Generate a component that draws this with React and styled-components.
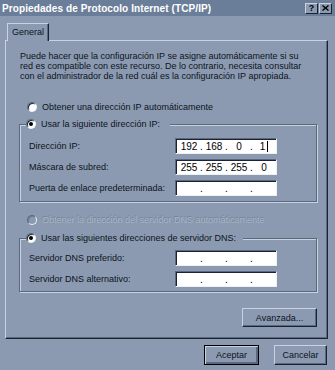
import React from 'react';
import styled, { createGlobalStyle } from 'styled-components';

const BG = '#8b9ab1';
const LIGHT = '#c9d3df';
const SHADOW = '#5a6980';
const DARK = '#1c2330';
const TEXT = '#0d1320';

const GlobalStyle = createGlobalStyle`
  html, body {
    margin: 0;
    padding: 0;
    background: ${BG};
  }
  body {
    font-family: "Liberation Sans", Arial, sans-serif;
    font-size: 9px;
    color: ${TEXT};
  }
`;

const Window = styled.div`
  width: 335px;
  height: 370px;
  background: ${BG};
  display: flex;
  flex-direction: column;
  overflow: hidden;
`;

const TitleBar = styled.div`
  height: 16px;
  background: #6b7e99;
  display: flex;
  align-items: center;
  justify-content: space-between;
  padding: 0 3px 0 2px;
`;

const Title = styled.span`
  color: #fff;
  font-weight: bold;
  font-size: 10px;
  letter-spacing: 0.1px;
  white-space: nowrap;
`;

const Controls = styled.div`
  display: flex;
  gap: 1px;
`;

const CtrlButton = styled.div`
  width: 13px;
  height: 11px;
  box-sizing: border-box;
  background: ${BG};
  border: 1px solid;
  border-color: ${LIGHT} ${DARK} ${DARK} ${LIGHT};
  display: flex;
  align-items: center;
  justify-content: center;
  font-weight: bold;
  font-size: 9px;
  line-height: 9px;
  color: #000;
`;

const Body = styled.div`
  padding: 7px 7px 0 5px;
  display: flex;
  flex-direction: column;
`;

const TabStrip = styled.div`
  display: flex;
  padding-left: 2px;
`;

const Tab = styled.div`
  position: relative;
  z-index: 1;
  height: 18px;
  width: 42px;
  box-sizing: border-box;
  margin-bottom: -1px;
  background: ${BG};
  border-top: 1px solid ${LIGHT};
  border-left: 1px solid ${LIGHT};
  border-right: 1px solid ${DARK};
  box-shadow: inset -1px 0 0 ${SHADOW};
  display: flex;
  align-items: center;
  justify-content: center;
  padding-bottom: 1px;
`;

const Panel = styled.div`
  height: 299px;
  box-sizing: border-box;
  border: 1px solid;
  border-color: ${LIGHT} ${DARK} ${DARK} ${LIGHT};
  box-shadow: inset -1px -1px 0 ${SHADOW};
  padding: 10px 10px 0 13px;
  display: flex;
  flex-direction: column;
`;

const Intro = styled.p`
  margin: 0;
  padding-left: 1px;
  line-height: 10px;
  white-space: nowrap;
`;

const Option = styled.div`
  display: flex;
  align-items: center;
  gap: 5px;
  height: 12px;
  line-height: 12px;
  white-space: nowrap;
  margin-left: ${(p) => p.$indent ?? 8}px;
  margin-top: ${(p) => p.$top ?? 0}px;
  color: ${(p) => (p.$disabled ? '#a9b5c6' : TEXT)};
  text-shadow: ${(p) => (p.$disabled ? '-0.6px -0.6px 0 #73829a' : 'none')};
`;

const Radio = styled.span`
  position: relative;
  width: 10px;
  height: 10px;
  flex: none;
  box-sizing: border-box;
  border-radius: 50%;
  background: ${(p) => (p.$disabled ? BG : '#fff')};
  border: 1px solid;
  border-color: ${SHADOW} #edf1f6 #edf1f6 ${SHADOW};
  box-shadow: inset 1px 1px 0 ${(p) => (p.$disabled ? '#6c7b92' : DARK)};

  &::after {
    content: '';
    display: ${(p) => (p.$checked ? 'block' : 'none')};
    position: absolute;
    left: 2px;
    top: 2px;
    width: 4px;
    height: 4px;
    border-radius: 50%;
    background: #000;
  }
`;

const Group = styled.fieldset`
  margin: ${(p) => p.$top}px 0 0 0;
  min-width: 0;
  padding: ${(p) => p.$padTop}px 9px ${(p) => p.$padBottom}px 9px;
  border: 1px solid ${SHADOW};
  box-shadow: inset 1px 1px 0 ${LIGHT}, 1px 1px 0 ${LIGHT};
  display: flex;
  flex-direction: column;
  gap: 5px;
`;

const Legend = styled.legend`
  margin-left: -3px;
  padding: 0 ${(p) => p.$gap}px 0 0;
  background: ${BG};
  position: relative;
`;

const FieldRow = styled.div`
  display: grid;
  grid-template-columns: 146px 102px;
  align-items: center;
  height: 16px;
  white-space: nowrap;
`;

const IpBox = styled.div`
  height: 16px;
  box-sizing: border-box;
  background: #fff;
  border: 1px solid;
  border-color: ${SHADOW} #edf1f6 #edf1f6 ${SHADOW};
  box-shadow: inset 1px 1px 0 ${DARK};
  display: flex;
  align-items: center;
  padding: 1px 0 0 2px;
  color: #000;
  font-size: 10px;
`;

const Segment = styled.span`
  width: 22px;
  display: flex;
  justify-content: center;
  align-items: center;
`;

const Dot = styled.span`
  width: 3px;
  text-align: center;
`;

const Caret = styled.span`
  display: inline-block;
  width: 1px;
  height: 11px;
  background: #000;
  margin-left: 2px;
`;

const Button = styled.div`
  width: ${(p) => p.$w}px;
  height: ${(p) => p.$h}px;
  box-sizing: border-box;
  border: 1px solid;
  border-color: ${(p) => (p.$default ? '#000' : `${LIGHT} ${DARK} ${DARK} ${LIGHT}`)};
  box-shadow: ${(p) =>
    p.$default
      ? `inset 1px 1px 0 ${LIGHT}, inset -2px -2px 0 ${SHADOW}`
      : `inset -1px -1px 0 ${SHADOW}`};
  display: flex;
  align-items: center;
  justify-content: center;
  white-space: nowrap;
`;

const AdvancedRow = styled.div`
  display: flex;
  justify-content: flex-end;
  margin-top: 16px;
`;

const Footer = styled.div`
  display: flex;
  justify-content: flex-end;
  gap: 15px;
  margin-top: 6px;
  padding-right: 1px;
`;

const IpField = ({ parts = ['', '', '', ''], caret }) => (
  <IpBox>
    {parts.map((part, i) => (
      <React.Fragment key={i}>
        <Segment>
          {part}
          {caret && i === 3 && <Caret />}
        </Segment>
        {i < 3 && <Dot>.</Dot>}
      </React.Fragment>
    ))}
  </IpBox>
);

const CloseGlyph = () => (
  <svg width="7" height="6" viewBox="0 0 7 6">
    <path d="M0.5 0.5 L6.5 5.5 M6.5 0.5 L0.5 5.5" stroke="#000" strokeWidth="1.4" />
  </svg>
);

const App = () => (
  <>
    <GlobalStyle />
    <Window>
      <TitleBar>
        <Title>Propiedades de Protocolo Internet (TCP/IP)</Title>
        <Controls>
          <CtrlButton>?</CtrlButton>
          <CtrlButton>
            <CloseGlyph />
          </CtrlButton>
        </Controls>
      </TitleBar>
      <Body>
        <TabStrip>
          <Tab>General</Tab>
        </TabStrip>
        <Panel>
          <Intro>
            Puede hacer que la configuración IP se asigne automáticamente si su
            <br />
            red es compatible con este recurso. De lo contrario, necesita consultar
            <br />
            con el administrador de la red cuál es la configuración IP apropiada.
          </Intro>
          <Option $top={20}>
            <Radio />
            Obtener una dirección IP automáticamente
          </Option>
          <Group $top={5} $padTop={8} $padBottom={5}>
            <Legend $gap={10}>
              <Option $indent={0}>
                <Radio $checked />
                Usar la siguiente dirección IP:
              </Option>
            </Legend>
            <FieldRow>
              <span>Dirección IP:</span>
              <IpField parts={['192', '168', '0', '1']} caret />
            </FieldRow>
            <FieldRow>
              <span>Máscara de subred:</span>
              <IpField parts={['255', '255', '255', '0']} />
            </FieldRow>
            <FieldRow>
              <span>Puerta de enlace predeterminada:</span>
              <IpField />
            </FieldRow>
          </Group>
          <Option $top={12} $disabled>
            <Radio $disabled />
            Obtener la dirección del servidor DNS automáticamente
          </Option>
          <Group $top={6} $padTop={6} $padBottom={4}>
            <Legend $gap={7}>
              <Option $indent={0}>
                <Radio $checked />
                Usar las siguientes direcciones de servidor DNS:
              </Option>
            </Legend>
            <FieldRow>
              <span>Servidor DNS preferido:</span>
              <IpField />
            </FieldRow>
            <FieldRow>
              <span>Servidor DNS alternativo:</span>
              <IpField />
            </FieldRow>
          </Group>
          <AdvancedRow>
            <Button $w={75} $h={19}>Avanzada...</Button>
          </AdvancedRow>
        </Panel>
        <Footer>
          <Button $w={55} $h={20} $default>Aceptar</Button>
          <Button $w={53} $h={20}>Cancelar</Button>
        </Footer>
      </Body>
    </Window>
  </>
);

export default App;
